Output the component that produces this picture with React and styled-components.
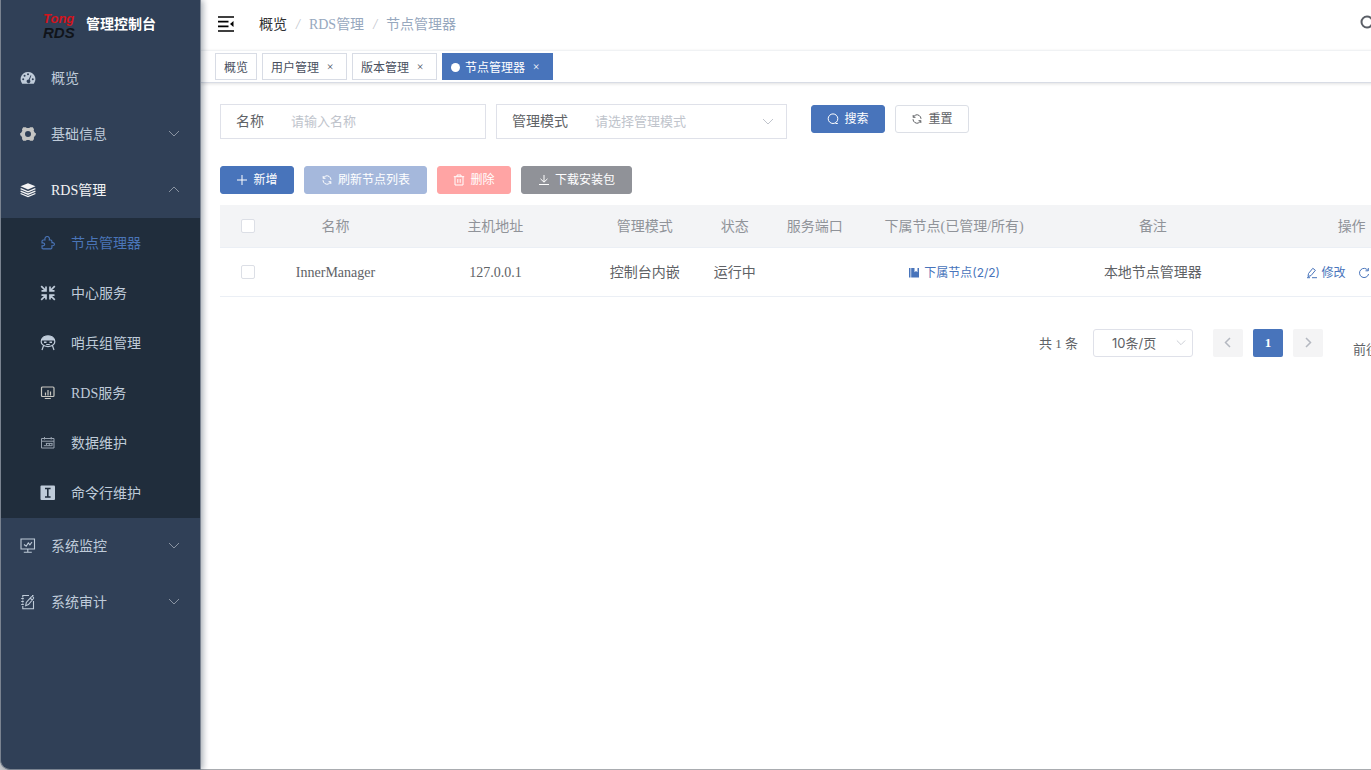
import React, { useState } from 'react';
import styled, { createGlobalStyle, ThemeProvider } from 'styled-components';

const theme = {
  color: {
    primary: '#4874bb',
    primaryLight: '#a5b8dc',
    danger: '#ffa4a4',
    info: '#909298',
    side: '#304057',
    sideDark: '#202d3c',
    sideText: '#bfcbd9',
    text: '#606266',
    muted: '#909399',
    placeholder: '#c0c4cc',
    border: '#dfe1e9',
    line: '#ebeff5',
  },
  font: {
    serif: "'Liberation Serif', 'Noto Sans CJK SC', serif",
    sans: "Inter, 'Noto Sans CJK SC', sans-serif",
  },
};

const GlobalStyle = createGlobalStyle`
  *, *::before, *::after {
    box-sizing: border-box;
  }

  body {
    margin: 0;
    overflow: hidden;
    background: #fff;
    font-family: ${theme.font.serif};
    font-size: 14px;
    color: ${theme.color.text};
  }

  a {
    color: inherit;
    text-decoration: none;
  }

  button, input, select {
    margin: 0;
    font-family: ${theme.font.sans};
  }
`;

const Shell = styled.div`
  display: flex;
  width: calc(100vw + 100px);
  min-height: 100vh;
  background: #c9cbce;
`;

const Sidebar = styled.aside`
  flex: none;
  width: 201px;
  background: ${props => props.theme.color.side};
  border: 1px solid #7a8390;
  border-top: none;
  border-bottom-left-radius: 10px;
  box-shadow: 2px 0 6px rgba(0, 21, 41, 0.35);
  z-index: 1;
`;

const Brand = styled.div`
  display: flex;
  align-items: center;
  gap: 9px;
  height: 50px;
  padding-left: 41px;
`;

const Logo = styled.svg`
  width: 35px;
  height: 30px;
  font-family: 'Liberation Sans', sans-serif;
  font-weight: bold;
  font-style: italic;
`;

const BrandTitle = styled.h1`
  margin: 0;
  padding-bottom: 2px;
  color: #fff;
  font: bold 14px/20px ${props => props.theme.font.sans};
`;

const MenuLink = styled.a`
  display: flex;
  align-items: center;
  gap: 15px;
  height: ${props => (props.$nested ? 50 : 56)}px;
  padding: 0 20px 0 ${props => (props.$nested ? 39 : 19)}px;
  color: ${props => props.$color || props.theme.color.sideText};
  line-height: 20px;

  span {
    flex: 1;
    padding-top: 2px;
  }
`;

const SubMenu = styled.div`
  background: ${props => props.theme.color.sideDark};
`;

const Main = styled.div`
  flex: 1;
  min-width: 0;
  background: #fff;
  border-bottom: 1px solid #a9acb0;
`;

const Navbar = styled.header`
  display: flex;
  align-items: center;
  height: 50px;
  padding: 0 91px 2px 16px;
`;

const IconButton = styled.button`
  display: flex;
  padding: 0;
  border: none;
  background: none;
  color: ${props => props.$color};
`;

const Breadcrumb = styled.nav`
  display: flex;
  flex: 1;
  gap: 9px;
  margin-left: 24px;
  padding-top: 1px;
  color: #97a8be;
  line-height: 20px;

  a {
    color: #303133;
  }

  i {
    color: ${props => props.theme.color.placeholder};
  }
`;

const TagsBar = styled.div`
  display: flex;
  gap: 5px;
  height: 33px;
  padding: 2px 14px;
  border-top: 1px solid #f0f2f4;
  border-bottom: 1px solid #d8dce5;
  box-shadow: 0 1px 3px rgba(0, 0, 0, 0.12);
`;

const Tag = styled.div`
  display: flex;
  align-items: center;
  height: 27px;
  padding: 1px 8px 0;
  font-size: 12px;
  color: ${props => (props.$active ? '#fff' : '#495060')};
  background: ${props => (props.$active ? props.theme.color.primary : '#fff')};
  border: 1px solid
    ${props => (props.$active ? props.theme.color.primary : '#d8dce5')};
`;

const Dot = styled.span`
  width: 9px;
  height: 9px;
  margin-right: 5px;
  border-radius: 50%;
  background: #fff;
`;

const TagClose = styled.button`
  width: 16px;
  height: 16px;
  margin-left: 3px;
  padding: 0;
  border: none;
  background: none;
  color: inherit;
  font: 12px/16px ${props => props.theme.font.serif};
`;

const Content = styled.main`
  padding: 21px 20px 20px 19px;
`;

const Filters = styled.form`
  display: flex;
  gap: 10px;
`;

const Field = styled.div`
  display: flex;
  align-items: center;
  gap: 27px;
  width: ${props => (props.$wide ? 291 : 266)}px;
  height: 35px;
  padding: 0 0 0 15px;
  border: 1px solid ${props => props.theme.color.border};

  label {
    flex: none;
    padding-bottom: 4px;
  }
`;

const FieldInput = styled.input`
  flex: 1;
  min-width: 0;
  height: 30px;
  padding: 0 0 2px;
  border: none;
  outline: none;
  font-size: 13px;

  &::placeholder {
    color: ${props => props.theme.color.placeholder};
  }
`;

const SelectBox = styled.div`
  display: grid;
  flex: ${props => (props.$small ? 'none' : 1)};
  align-items: center;

  svg {
    grid-area: 1 / 1;
    justify-self: end;
    margin-right: ${props => (props.$small ? 7 : 12)}px;
    color: ${props => props.theme.color.placeholder};
    pointer-events: none;
  }
`;

const Select = styled.select`
  grid-area: 1 / 1;
  width: 100%;
  height: 30px;
  padding: 0 0 2px;
  appearance: none;
  border: none;
  outline: none;
  background: none;
  font-size: 13px;
  color: ${props => props.theme.color.placeholder};
`;

const SizeSelect = styled(Select)`
  width: 100px;
  height: 28px;
  padding: 0 0 0 18px;
  border: 1px solid ${props => props.theme.color.border};
  border-radius: 3px;
  color: ${props => props.theme.color.text};
`;

const ButtonRow = styled.div`
  display: flex;
  gap: 10px;
  padding: ${props => (props.$search ? '1px 0 0 14px' : '27px 0 11px')};
`;

const variants = {
  primary: { bg: theme.color.primary, border: theme.color.primary, fg: '#fff' },
  light: { bg: theme.color.primaryLight, border: theme.color.primaryLight, fg: '#fff' },
  danger: { bg: theme.color.danger, border: theme.color.danger, fg: '#fff' },
  info: { bg: theme.color.info, border: theme.color.info, fg: '#fff' },
  plain: { bg: '#fff', border: '#dcdfe6', fg: theme.color.text },
};

const Button = styled.button`
  display: inline-flex;
  align-items: center;
  justify-content: center;
  gap: 5px;
  min-width: ${props => props.$width || 74}px;
  height: 28px;
  padding: 0;
  border: 1px solid ${props => variants[props.$variant].border};
  border-radius: 3px;
  background: ${props => variants[props.$variant].bg};
  color: ${props => variants[props.$variant].fg};
  font-size: 12px;
  line-height: 16px;
`;

const Table = styled.table`
  width: 100%;
  table-layout: fixed;
  border-collapse: separate;
  border-spacing: 0;
  line-height: 20px;
  text-align: center;

  th,
  td {
    padding: 2px 0 0;
    border-bottom: 1px solid ${props => props.theme.color.line};
  }

  th {
    height: 43px;
    background: #f3f4f6;
    color: ${props => props.theme.color.muted};
    font-weight: 400;
  }

  td {
    height: 49px;
  }
`;

const Checkbox = styled.input`
  display: block;
  width: 14px;
  height: 14px;
  margin: 0 auto 2px;
  appearance: none;
  border: 1px solid #dcdfe6;
  border-radius: 2px;
  background: #fff;
`;

const RowActions = styled.div`
  display: flex;
  justify-content: center;
  gap: 12px;
`;

const RowLink = styled.a`
  display: inline-flex;
  align-items: center;
  gap: 4px;
  color: ${props => props.theme.color.primary};
  font: 12px/16px ${props => props.theme.font.sans};
`;

const Pagination = styled.div`
  display: flex;
  align-items: center;
  justify-content: flex-end;
  gap: 10px;
  margin-top: 32px;
  height: 28px;
  font-size: 13px;
`;

const Total = styled.span`
  margin-right: 5px;
  padding-bottom: 2px;
`;

const Pager = styled.div`
  display: flex;
  gap: 10px;
  margin: 0 20px 0 10px;
`;

const PageButton = styled.button`
  display: flex;
  align-items: center;
  justify-content: center;
  width: 30px;
  height: 28px;
  padding: 0;
  border: none;
  border-radius: 2px;
  background: ${props => (props.$active ? props.theme.color.primary : '#f4f4f5')};
  color: ${props => (props.$active ? '#fff' : '#b4b8c0')};
  font: bold 13px ${props => props.theme.font.serif};
`;

const Jumper = styled.label`
  display: flex;
  align-items: center;
  gap: 4px;
  padding-top: 10px;

  input {
    width: 51px;
    height: 28px;
    border: 1px solid ${props => props.theme.color.border};
    border-radius: 3px;
    text-align: center;
  }
`;

const Icon = ({ size = 16, box = 16, children, ...rest }) => (
  <svg
    width={size}
    height={size}
    viewBox={`0 0 ${box} ${box}`}
    fill="none"
    stroke="currentColor"
    strokeWidth="1"
    aria-hidden="true"
    {...rest}
  >
    {children}
  </svg>
);

const DashboardIcon = () => (
  <Icon>
    <path
      fill="currentColor"
      stroke="none"
      fillRule="evenodd"
      d="M8 2a7.200 7.200 0 0 0-6 11.400c.2.300.4.400.8.400h10.400c.4 0 .6-.1.800-.4A7.200 7.200 0 0 0 8 2zM8 3.300a1 1 0 1 1 0 2 1 1 0 0 1 0-2zM4.600 4.800a1 1 0 1 1 0 2 1 1 0 0 1 0-2zM3.200 8.300a1 1 0 1 1 0 2 1 1 0 0 1 0-2zM12.800 8.300a1 1 0 1 1 0 2 1 1 0 0 1 0-2zM10.600 5.200l.8.300-1.700 4.300a1.900 1.900 0 1 1-1-.4z"
    />
  </Icon>
);

const GearIcon = () => (
  <Icon color="#c5c5c3">
    <path
      fill="currentColor"
      stroke="none"
      fillRule="evenodd"
      d="M3.200 1.200h2.600l1 .9h2.400l1-.9h2.600l1.200 2-.3 1.600 1.300 2.100h.8v2.400l-.9.500-1.100 2 .2 1.300-1.200 1.700h-2.600l-1-.8H6.800l-1 .8H3.200L2 13.100l.2-1.300-1.100-2-.9-.5V6.900H1l1.300-2.100L2 3.200zM8 5a3 3 0 1 0 0 6 3 3 0 0 0 0-6z"
    />
  </Icon>
);

const LayersIcon = () => (
  <Icon>
    <path fill="currentColor" stroke="none" d="M8 1.200l7.500 3.100L8 7.600.5 4.300z" />
    <path d="M.6 6.700 8 9.800l7.400-3.100M.6 9.100 8 12.200l7.400-3.100M.6 11.500 8 14.500l7.400-3" strokeWidth="1.300" />
  </Icon>
);

const PuzzleIcon = () => (
  <Icon>
    <path d="M2 6.200c0-.8.400-1.200 1.200-1.200H5C4 .4 10.500.4 9.300 5h1.400c.8 0 1.200.4 1.200 1.200v1.500c3.300-.6 3.300 3.500 0 3v2c0 .8-.4 1.200-1.200 1.200H3.200c-.8 0-1.200-.4-1.200-1.200v-1.900c3.600.5 3.600-3.500 0-2.900z" strokeWidth="1.100" />
  </Icon>
);

const CompressIcon = () => (
  <Icon strokeWidth="1.700">
    <path d="M1.200 1.200l4 4M6 1.500v4.300H1.500M14.800 1.200l-4 4M10 1.500v4.300h4.500M1.200 14.800l4-4M6 14.500v-4.300H1.500M14.800 14.800l-4-4M10 14.500v-4.300h4.500" />
  </Icon>
);

const SoldierIcon = () => (
  <Icon>
    <path d="M1.300 5C2 2.200 4.600.8 8 .8S14 2.200 14.700 5z" fill="currentColor" />
    <path d="M1.600 5c-1.500 3.700 1.800 6.600 6.400 6.600S15.900 8.700 14.400 5M3.500 10.800 2 15M12.500 10.800 14 15M6.200 9.500h3.600" strokeWidth="1.200" />
    <path d="M4 7.200h2.500M9.500 7.200H12" strokeWidth="1.400" />
  </Icon>
);

const BoardIcon = () => (
  <Icon color="#c9c8c2">
    <rect x="1.500" y="2" width="12.500" height="9.500" rx="1" strokeWidth="1.200" />
    <path d="M5.500 7.500v3M8 5v5.500M10.500 6.500v4M4.800 13.500h6" strokeWidth="1.200" />
  </Icon>
);

const CalendarIcon = () => (
  <Icon color="#98a3b0">
    <path d="M1.500 3.500h12.500v9.500H1.500zM1.500 6.200h12.500M4.500 2v2.500M11.200 2v2.500M5.800 8.400h6.500M3.800 10.700h8M6.500 8v2M9.300 8v3M12 8v3" />
  </Icon>
);

const InputIcon = () => (
  <Icon>
    <rect x=".5" y=".5" width="14.500" height="14.500" rx="1" fill="currentColor" stroke="none" />
    <path d="M5 3.500h5.600M5 12h5.600M7.800 3.500V12" stroke="#202d3c" strokeWidth="1.600" />
  </Icon>
);

const MonitorIcon = () => (
  <Icon>
    <path d="M1 1h13.500v10H1zM7.800 11v3M3.800 14.200h8M4 6.500l2.200 1.700L8.300 5l1.600 1.800L12 4" strokeWidth="1.100" />
  </Icon>
);

const AuditIcon = () => (
  <Icon>
    <path d="M9 1.500H2.800v2M12 1.500h1.500M2.800 5.500v1M2.800 8.500v1M2.800 12v2.800h10.700V7M1.200 4.500h2.600M1.200 7.500h2.600M1.200 10.500h2.600M5.700 11.700l.6-3.200 5-5.700c.9-.9 2.900.6 2.200 1.700l-5 6zM10.200 4.300l2.200 1.700" strokeWidth="1.100" />
  </Icon>
);

const Chevron = ({ dir = 'down', size = 12, ...rest }) => {
  const paths = {
    down: 'M1 3 6 8l5-5',
    up: 'M1 8 6 3l5 5',
    left: 'M8 1 3.500 5.500 8 10',
    right: 'M4 1 8.500 5.500 4 10',
  };
  return (
    <Icon size={size} box={12} {...rest}>
      <path d={paths[dir]} />
    </Icon>
  );
};

const HamburgerIcon = () => (
  <Icon size={18} box={18}>
    <path d="M1 2h16M1 6.700h10.500M1 11.300h10.500M1 16h16" strokeWidth="1.700" />
    <path d="M16.500 6v6L13 9z" fill="currentColor" stroke="none" />
  </Icon>
);

const SearchIcon = ({ size = 12, ...rest }) => (
  <Icon size={size} box={12} {...rest}>
    <circle cx="6" cy="5.700" r="4.800" />
    <path d="M8.500 10.500h2.300" />
  </Icon>
);

const RefreshIcon = () => (
  <Icon size={12} box={12}>
    <path d="M2.200 2v2.300h2.300M2 6.200A4.200 4.200 0 0 0 7.600 10M9.800 10V7.700H7.500M10 5.800A4.200 4.200 0 0 0 4.400 2M2.300 4.200 4.400 2M9.700 7.800 7.600 10" />
  </Icon>
);

const RefreshRightIcon = () => (
  <Icon size={12} box={12}>
    <path d="M10 3.500A4.600 4.600 0 1 0 10.600 7M10.300 1v2.800H7.500" />
  </Icon>
);

const PlusIcon = () => (
  <Icon size={12} box={12}>
    <path d="M6 1v10M1 6h10" />
  </Icon>
);

const TrashIcon = () => (
  <Icon size={12} box={12}>
    <path d="M.8 2.700h10.400M4 2.500V1h4v1.500M2 2.700V11h8V2.700M4.800 5v3.800M7.200 5v3.800" />
  </Icon>
);

const DownloadIcon = () => (
  <Icon size={12} box={12}>
    <path d="M6 1v7M2.500 4.800 6 8.200l3.500-3.400M1 10.500h10" />
  </Icon>
);

const EditIcon = () => (
  <Icon size={12} box={12}>
    <path d="M2 9.500l.5-3L6.800 1.300l2.600 2-4.400 5.300zM1 10.700h3M6 10.700h5" />
  </Icon>
);

const NotebookIcon = () => (
  <Icon size={12} box={12} fill="currentColor" stroke="none">
    <path d="M1 1h1.500v9.500H1zM3.200 1h3.300v4.200l1.500-1.200 1.500 1.200V1H11v9.500H3.200z" />
  </Icon>
);

const subItems = [
  { text: '节点管理器', icon: PuzzleIcon, color: '#4a75b8' },
  { text: '中心服务', icon: CompressIcon },
  { text: '哨兵组管理', icon: SoldierIcon },
  { text: 'RDS服务', icon: BoardIcon },
  { text: '数据维护', icon: CalendarIcon },
  { text: '命令行维护', icon: InputIcon },
];

const tags = ['概览', '用户管理', '版本管理', '节点管理器'];

const headers = [
  '名称',
  '主机地址',
  '管理模式',
  '状态',
  '服务端口',
  '下属节点(已管理/所有)',
  '备注',
  '操作',
];

const MenuItem = ({ icon: ItemIcon, text, arrow, nested, color }) => (
  <MenuLink href="#" $nested={nested} $color={color}>
    <ItemIcon />
    <span>{text}</span>
    {arrow && <Chevron dir={arrow} color="#8a94a2" />}
  </MenuLink>
);

const SideMenu = () => (
  <Sidebar>
    <Brand>
      <Logo viewBox="0 0 35 30">
        <text x="1" y="13" fontSize="13" fill="#d2141c">
          Tong
        </text>
        <text x="1" y="28" fontSize="15" fill="#10141a">
          RDS
        </text>
      </Logo>
      <BrandTitle>管理控制台</BrandTitle>
    </Brand>
    <MenuItem icon={DashboardIcon} text="概览" />
    <MenuItem icon={GearIcon} text="基础信息" arrow="down" />
    <MenuItem icon={LayersIcon} text="RDS管理" arrow="up" color="#f4f4f5" />
    <SubMenu>
      {subItems.map(item => (
        <MenuItem key={item.text} nested {...item} />
      ))}
    </SubMenu>
    <MenuItem icon={MonitorIcon} text="系统监控" arrow="down" />
    <MenuItem icon={AuditIcon} text="系统审计" arrow="down" />
  </Sidebar>
);

const App = () => {
  const [name, setName] = useState('');

  return (
    <ThemeProvider theme={theme}>
      <GlobalStyle />
      <Shell>
        <SideMenu />
        <Main>
          <Navbar>
            <IconButton $color="#000" aria-label="收起菜单">
              <HamburgerIcon />
            </IconButton>
            <Breadcrumb>
              <a href="#">概览</a>
              <i>/</i>
              <span>RDS管理</span>
              <i>/</i>
              <span>节点管理器</span>
            </Breadcrumb>
            <IconButton $color="#5a5e66" aria-label="查找">
              <Icon size={20} box={20} strokeWidth="2">
                <circle cx="7" cy="8" r="5.500" />
                <path d="M11 12l4 4" />
              </Icon>
            </IconButton>
          </Navbar>
          <TagsBar>
            {tags.map((tag, i) => (
              <Tag key={tag} $active={i === 3}>
                {i === 3 && <Dot />}
                <a href="#">{tag}</a>
                {i > 0 && <TagClose aria-label={`关闭${tag}`}>×</TagClose>}
              </Tag>
            ))}
          </TagsBar>
          <Content>
            <Filters onSubmit={e => e.preventDefault()}>
              <Field>
                <label htmlFor="name">名称</label>
                <FieldInput
                  id="name"
                  placeholder="请输入名称"
                  value={name}
                  onChange={e => setName(e.target.value)}
                />
              </Field>
              <Field $wide>
                <label htmlFor="mode">管理模式</label>
                <SelectBox>
                  <Select id="mode">
                    <option>请选择管理模式</option>
                  </Select>
                  <Chevron />
                </SelectBox>
              </Field>
              <ButtonRow $search>
                <Button $variant="primary">
                  <SearchIcon />
                  搜索
                </Button>
                <Button $variant="plain" type="button" onClick={() => setName('')}>
                  <RefreshIcon />
                  重置
                </Button>
              </ButtonRow>
            </Filters>
            <ButtonRow>
              <Button $variant="primary">
                <PlusIcon />
                新增
              </Button>
              <Button $variant="light" $width={123}>
                <RefreshIcon />
                刷新节点列表
              </Button>
              <Button $variant="danger">
                <TrashIcon />
                删除
              </Button>
              <Button $variant="info" $width={111}>
                <DownloadIcon />
                下载安装包
              </Button>
            </ButtonRow>
            <Table>
              <colgroup>
                <col width="55" />
                <col width="121" />
                <col />
                <col width="100" />
                <col width="80" />
                <col width="80" />
                <col />
                <col />
                <col />
              </colgroup>
              <thead>
                <tr>
                  <th>
                    <Checkbox type="checkbox" aria-label="全选" />
                  </th>
                  {headers.map(header => (
                    <th key={header}>{header}</th>
                  ))}
                </tr>
              </thead>
              <tbody>
                <tr>
                  <td>
                    <Checkbox type="checkbox" aria-label="选择 InnerManager" />
                  </td>
                  <td>InnerManager</td>
                  <td>127.0.0.1</td>
                  <td>控制台内嵌</td>
                  <td>运行中</td>
                  <td />
                  <td>
                    <RowActions>
                      <RowLink href="#">
                        <NotebookIcon />
                        下属节点(2/2)
                      </RowLink>
                    </RowActions>
                  </td>
                  <td>本地节点管理器</td>
                  <td>
                    <RowActions>
                      <RowLink href="#">
                        <EditIcon />
                        修改
                      </RowLink>
                      <RowLink href="#">
                        <RefreshRightIcon />
                        重启
                      </RowLink>
                    </RowActions>
                  </td>
                </tr>
              </tbody>
            </Table>
            <Pagination>
              <Total>共 1 条</Total>
              <SelectBox $small>
                <SizeSelect aria-label="每页条数">
                  <option>10条/页</option>
                </SizeSelect>
                <Chevron size={10} />
              </SelectBox>
              <Pager>
                <PageButton aria-label="上一页">
                  <Chevron dir="left" strokeWidth="1.500" />
                </PageButton>
                <PageButton $active>1</PageButton>
                <PageButton aria-label="下一页">
                  <Chevron dir="right" strokeWidth="1.500" />
                </PageButton>
              </Pager>
              <Jumper>
                前往
                <input defaultValue="1" />
                页
              </Jumper>
            </Pagination>
          </Content>
        </Main>
      </Shell>
    </ThemeProvider>
  );
};

export default App;
